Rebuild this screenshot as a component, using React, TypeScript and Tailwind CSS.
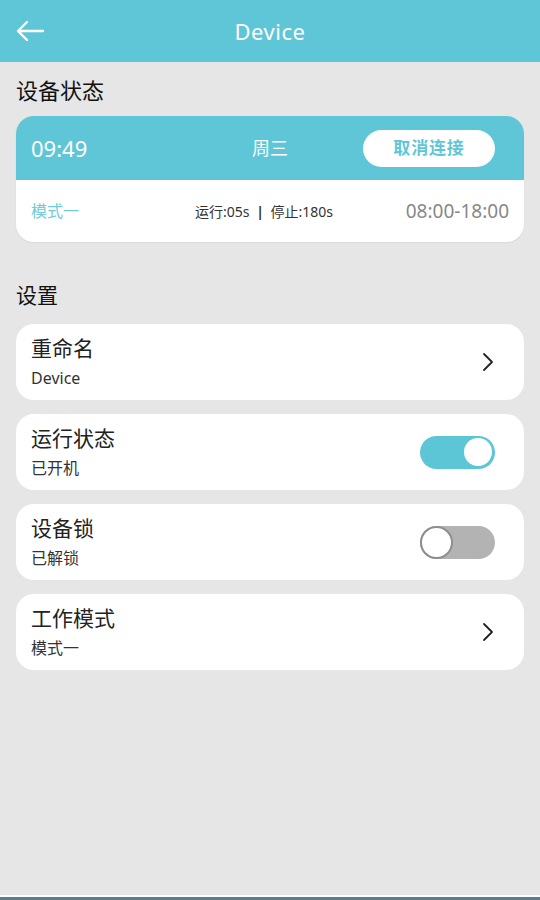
import React, { useState } from 'react';

const font = { fontFamily: '"Noto Sans", "Noto Sans CJK SC", sans-serif' };

function Toggle({ on, onClick }: { on: boolean; onClick: () => void }) {
  return (
    <button
      onClick={onClick}
      className={`w-[75px] h-[33px] rounded-full p-[3px] flex items-center ${on ? 'bg-[#5cc5d6] justify-end' : 'bg-[#b3b3b3] justify-start'}`}
    >
      <span
        className={`block rounded-full bg-white ${on ? 'w-[28px] h-[28px]' : 'border-2 border-[#8e8e8e] w-[33px] h-[33px] -ml-[3px]'}`}
      />
    </button>
  );
}

function Chevron() {
  return (
    <svg className="w-[14px] h-[22px]" viewBox="0 0 14 22" fill="none" stroke="#222" strokeWidth="1.8">
      <path d="M3 3l8 8-8 8" strokeLinecap="round" strokeLinejoin="round" />
    </svg>
  );
}

function Row({ title, sub, right }: { title: string; sub: string; right: React.ReactNode }) {
  return (
    <div className="bg-white rounded-[18px] h-[76px] pl-[15px] pr-[29px] flex items-center justify-between">
      <div className="flex flex-col -mt-[2px]">
        <span className="text-[21px] leading-[28px] text-[#222]">{title}</span>
        <span className="text-[16px] leading-[22px] text-[#333] mt-[5px]">{sub}</span>
      </div>
      {right}
    </div>
  );
}

export default function App() {
  const [running, setRunning] = useState(true);
  const [locked, setLocked] = useState(false);

  return (
    <div className="w-[540px] h-[900px] bg-[#e6e6e6] flex flex-col" style={font}>
      <div className="h-[62px] bg-[#5fc6d8] flex items-center relative shrink-0">
        <button className="absolute left-[15px] top-[17px]">
          <svg className="w-[30px] h-[28px]" viewBox="0 0 30 28" fill="none" stroke="white" strokeWidth="2.4" strokeLinecap="round" strokeLinejoin="round">
            <path d="M28 14H3M12 5l-9 9 9 9" />
          </svg>
        </button>
        <span className="mx-auto text-white text-[22px] tracking-wide">Device</span>
      </div>

      <div className="flex-1 px-[16px]">
        <div className="text-[22px] text-[#111] mt-[13px] leading-[30px]">设备状态</div>

        <div className="mt-[11px] rounded-[18px] overflow-hidden shadow-[0_1px_2px_rgba(0,0,0,0.06)]">
          <div className="h-[64px] bg-[#5fc6d8] flex items-center pl-[15px] pr-[29px]">
            <span className="text-white text-[22px] w-[221px]">09:49</span>
            <span className="text-white text-[18px]">周三</span>
            <button className="ml-auto w-[132px] h-[37px] rounded-full bg-white text-[#5fc6d8] text-[17px] font-semibold tracking-wider">
              取消连接
            </button>
          </div>
          <div className="h-[62px] bg-white flex items-center pl-[15px] pr-[15px]">
            <span className="text-[#6fcbd9] text-[16px] w-[164px]">模式一</span>
            <span className="text-[#333] text-[14px]">运行:05s <span className="font-bold mx-[3px]">|</span> 停止:180s</span>
            <span className="ml-auto text-[#888] text-[19px]">08:00-18:00</span>
          </div>
        </div>

        <div className="text-[21px] text-[#111] mt-[38px] leading-[30px]">设置</div>

        <div className="mt-[14px] flex flex-col gap-[14px]">
          <Row title="重命名" sub="Device" right={<Chevron />} />
          <Row title="运行状态" sub="已开机" right={<Toggle on={running} onClick={() => setRunning(!running)} />} />
          <Row title="设备锁" sub="已解锁" right={<Toggle on={locked} onClick={() => setLocked(!locked)} />} />
          <Row title="工作模式" sub="模式一" right={<Chevron />} />
        </div>
      </div>

      <div className="h-[2px] bg-white shrink-0" />
      <div className="h-[3px] bg-[#5a7f8a] shrink-0" />
    </div>
  );
}
